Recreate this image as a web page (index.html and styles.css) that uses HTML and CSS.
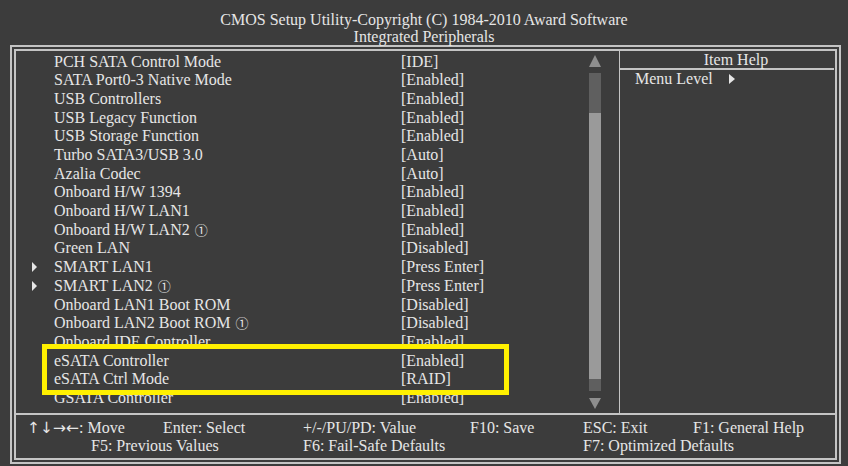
FILE: index.html
```html
<!DOCTYPE html>
<html>
<head>
	<meta charset='utf-8'>
	<title>Integrated Peripherals</title>
	<link rel="stylesheet" href="styles.css">
</head>
<body>

	<div class="header">
		CMOS Setup Utility-Copyright (C) 1984-2010 Award Software<br>
		Integrated Peripherals
	</div>

	<div class="frame">
	<div class="inner">

		<div class="top">
			<div class="main">
				<div class="list">
					<span></span><span>PCH SATA Control Mode</span><span>[IDE]</span>
					<span></span><span>SATA Port0-3 Native Mode</span><span>[Enabled]</span>
					<span></span><span>USB Controllers</span><span>[Enabled]</span>
					<span></span><span>USB Legacy Function</span><span>[Enabled]</span>
					<span></span><span>USB Storage Function</span><span>[Enabled]</span>
					<span></span><span>Turbo SATA3/USB 3.0</span><span>[Auto]</span>
					<span></span><span>Azalia Codec</span><span>[Auto]</span>
					<span></span><span>Onboard H/W 1394</span><span>[Enabled]</span>
					<span></span><span>Onboard H/W LAN1</span><span>[Enabled]</span>
					<span></span><span>Onboard H/W LAN2 <i class="note">&#9312;</i></span><span>[Enabled]</span>
					<span></span><span>Green LAN</span><span>[Disabled]</span>
					<span class="sub"></span><span>SMART LAN1</span><span>[Press Enter]</span>
					<span class="sub"></span><span>SMART LAN2 <i class="note">&#9312;</i></span><span>[Press Enter]</span>
					<span></span><span>Onboard LAN1 Boot ROM</span><span>[Disabled]</span>
					<span></span><span>Onboard LAN2 Boot ROM <i class="note">&#9312;</i></span><span>[Disabled]</span>
					<span></span><span>Onboard IDE Controller</span><span>[Enabled]</span>
					<span></span><span>eSATA Controller</span><span>[Enabled]</span>
					<span></span><span>eSATA Ctrl Mode</span><span>[RAID]</span>
					<span></span><span>GSATA Controller</span><span>[Enabled]</span>
				</div>

				<div class="scroll">
					<div class="arrow-up"></div>
					<div class="track">
						<div class="thumb"></div>
					</div>
					<div class="arrow-down"></div>
				</div>

				<div class="mark"></div>
			</div>

			<div class="help">
				<div class="help-title">Item Help</div>
				<div class="help-line">Menu Level <span class="tri"></span></div>
			</div>
		</div>

		<div class="footer">
			<div class="keys k1">
				<div><span class="w1"><span class="arr">&#8593;&#8595;&#8594;&#8592;</span>: Move</span>Enter: Select</div>
				<div class="ind">F5: Previous Values</div>
			</div>
			<div class="keys k2">
				<div><span class="w2">+/-/PU/PD: Value</span>F10: Save</div>
				<div>F6: Fail-Safe Defaults</div>
			</div>
			<div class="keys k3">
				<div><span class="w3">ESC: Exit</span>F1: General Help</div>
				<div>F7: Optimized Defaults</div>
			</div>
		</div>

	</div>
	</div>

</body>
</html>
```

FILE: styles.css
```css
body{
	margin: 0;
	background-color: #3c3c3c;
	color: #e6e6e6;
	font-family: "Liberation Serif", "DejaVu Serif", serif;
	font-size: 16px;
}
.header{
	height: 45px;
	box-sizing: border-box;
	padding-top: 11px;
	text-align: center;
	line-height: 17px;
}
.frame{
	margin-left: 10px;
	width: 831px;
	height: 419px;
	box-sizing: border-box;
	border: 2px solid #c4c4c4;
	padding: 2px;
}
.inner{
	height: 100%;
	box-sizing: border-box;
	border: 2px solid #c4c4c4;
	display: flex;
	flex-direction: column;
}
.top{
	display: flex;
	height: 362px;
}
.main{
	position: relative;
	width: 603px;
	display: flex;
	border-right: 1px solid #c4c4c4;
}
.list{
	flex: 1;
	display: grid;
	grid-template-columns: 22px 347px auto;
	grid-auto-rows: 18.7px;
	line-height: 18.7px;
	padding: 1.6px 0 0 16px;
}
.note{
	font-style: normal;
	font-family: "Noto Sans CJK JP", "DejaVu Sans", sans-serif;
	font-size: 13px;
	margin-left: 1px;
}
.sub::before{
	content: "";
	display: inline-block;
	border-left: 5px solid #e6e6e6;
	border-top: 5px solid transparent;
	border-bottom: 5px solid transparent;
	margin-top: 4px;
}
.scroll{
	width: 12px;
	margin-right: 18px;
	display: flex;
	flex-direction: column;
	align-items: center;
}
.arrow-up{
	margin-top: 4px;
	border-left: 6px solid transparent;
	border-right: 6px solid transparent;
	border-bottom: 12px solid #8e8e8e;
}
.track{
	margin-top: 6px;
	width: 12px;
	height: 318px;
	background-color: #5f5f5f;
	padding-top: 40px;
	box-sizing: border-box;
}
.thumb{
	height: 266px;
	background-color: #9a9a9a;
}
.arrow-down{
	margin-top: 7px;
	border-left: 6px solid transparent;
	border-right: 6px solid transparent;
	border-top: 11px solid #8e8e8e;
}
.mark{
	position: absolute;
	left: 26px;
	top: 293px;
	width: 467px;
	height: 51px;
	box-sizing: border-box;
	border: 5px solid #fff000;
}
.help{
	flex: 1;
	padding-right: 1px;
}
.help-title{
	text-align: center;
	line-height: 17px;
	border-bottom: 2px solid #c4c4c4;
	padding-left: 18px;
}
.help-line{
	padding-left: 15px;
	line-height: 18px;
}
.tri{
	display: inline-block;
	margin-left: 12px;
	border-left: 6px solid #e6e6e6;
	border-top: 5px solid transparent;
	border-bottom: 5px solid transparent;
}
.footer{
	flex: 1;
	border-top: 2px solid #c4c4c4;
	display: flex;
	padding-top: 4px;
	line-height: 18px;
}
.keys div{
	white-space: nowrap;
}
.k1{
	width: 276px;
	padding-left: 11px;
}
.k2{
	width: 280px;
}
.w1{
	display: inline-block;
	width: 136px;
}
.ind{
	padding-left: 64px;
}
.arr{
	font-family: "DejaVu Sans", sans-serif;
	font-size: 15.5px;
}
.w2{
	display: inline-block;
	width: 167px;
}
.w3{
	display: inline-block;
	width: 110px;
}
```
